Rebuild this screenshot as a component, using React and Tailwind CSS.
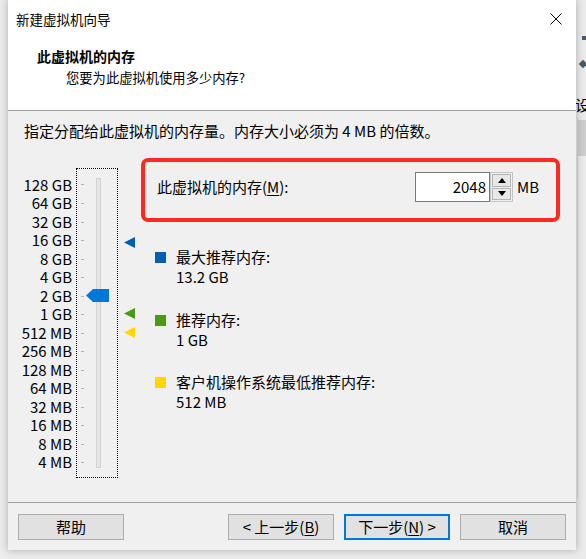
import React from "react";

const labels = ["128 GB","64 GB","32 GB","16 GB","8 GB","4 GB","2 GB","1 GB","512 MB","256 MB","128 MB","64 MB","32 MB","16 MB","8 MB","4 MB"];

function Tri({ color, top }) {
  return (
    <svg className="absolute left-[6px]" style={{ top }} width="11" height="11" viewBox="0 0 11 11">
      <polygon points="0,5.5 11,0 11,11" fill={color} />
    </svg>
  );
}

function Legend({ color, title, value, mt }) {
  return (
    <div className={`flex ${mt}`}>
      <div className="w-[11px] h-[11px] ml-[14px] mt-[5px]" style={{ background: color }} />
      <div className="ml-[10px] text-[15px] leading-[20px] text-black">
        <div>{title}</div>
        <div>{value}</div>
      </div>
    </div>
  );
}

export default function App() {
  return (
    <div className="flex w-[586px] h-[559px] bg-[#ececec] overflow-hidden font-['Noto_Sans_CJK_SC',sans-serif] text-black">
      <div className="w-[8px] shrink-0" />
      <div className="w-[568px] h-[550px] shrink-0 flex flex-col bg-[#f0f0f0] shadow-[0_0_8px_rgba(0,0,0,0.28)] relative z-10">
        <div className="h-[110px] bg-white flex flex-col">
          <div className="h-[38px] flex items-center justify-between pl-[8px] pr-[14px]">
            <span className="text-[13.5px] leading-[20px]">新建虚拟机向导</span>
            <svg width="12" height="12" viewBox="0 0 12 12">
              <path d="M0.5 0.5 L11.5 11.5 M11.5 0.5 L0.5 11.5" stroke="#000" strokeWidth="1" />
            </svg>
          </div>
          <div className="mt-[8px] pl-[29px] text-[14px] font-bold leading-[20px]">此虚拟机的内存</div>
          <div className="mt-[2px] pl-[58px] text-[13.3px] leading-[20px]">您要为此虚拟机使用多少内存?</div>
        </div>
        <div className="h-px bg-[#a0a0a0]" />
        <div className="flex-1 flex flex-col px-[16px] pt-[10px]">
          <div className="text-[15px] leading-[20px] whitespace-nowrap">指定分配给此虚拟机的内存量。内存大小必须为 4 MB 的倍数。</div>
          <div className="mt-[17px] flex items-start">
            <div className="w-[48px] mt-[10px] pt-[7.73px] flex flex-col items-end">
              {labels.map((l) => (
                <div key={l} className="h-[18.53px] leading-[18.53px] text-[15px] whitespace-nowrap">{l}</div>
              ))}
            </div>
            <div className="ml-[4px] mt-[10px] w-[42px] h-[310px] border border-dotted border-black relative flex">
              <div className="ml-[4px] w-[3px] pt-[6.73px] flex flex-col">
                {labels.map((l) => (
                  <div key={l} className="h-[18.53px] flex items-center">
                    <div className="w-[3px] h-px bg-[#b4b4b4]" />
                  </div>
                ))}
              </div>
              <div className="ml-[12px] mt-[9px] w-[5px] h-[290px] bg-[#e6e6e6] border border-[#d2d2d2]" />
              <svg className="absolute left-[9px] top-[120px]" width="23" height="13" viewBox="0 0 23 13">
                <polygon points="0,6.5 7,0 23,0 23,13 7,13" fill="#0078d7" />
              </svg>
            </div>
            <div className="w-[23px] self-stretch relative">
              <Tri color="#005fb0" top={79} />
              <Tri color="#4b9a17" top={150} />
              <Tri color="#ffd700" top={169} />
            </div>
            <div className="w-[419px] flex flex-col">
              <div className="h-[64px] border-4 border-[#ff2a1f] rounded-[7px] pt-[10px] pl-[12px]">
                <div className="flex items-center h-[30px]">
                  <div className="w-[258px] text-[15px] leading-[20px]">此虚拟机的内存(<span className="underline underline-offset-2">M</span>):</div>
                  <div className="w-[75px] h-[30px] border border-[#7a7a7a] bg-white text-right pr-[3px] text-[15px] leading-[28px]">2048</div>
                  <div className="w-[23px] h-[30px] flex flex-col bg-[#f0f0f0] border border-[#c4c4c4] p-px gap-px">
                    <div className="flex-1 flex items-center justify-center bg-[#e8e8e8] border border-[#b4b4b4]">
                      <svg width="8" height="5" viewBox="0 0 8 5"><polygon points="4,0 8,5 0,5" fill="#000" /></svg>
                    </div>
                    <div className="flex-1 flex items-center justify-center bg-[#e8e8e8] border border-[#b4b4b4]">
                      <svg width="8" height="5" viewBox="0 0 8 5"><polygon points="0,0 8,0 4,5" fill="#000" /></svg>
                    </div>
                  </div>
                  <div className="ml-[4px] text-[15px] leading-[20px]">MB</div>
                </div>
              </div>
              <Legend color="#005fb0" title="最大推荐内存:" value="13.2 GB" mt="mt-[25px]" />
              <Legend color="#4b9a17" title="推荐内存:" value="1 GB" mt="mt-[23px]" />
              <Legend color="#ffd700" title="客户机操作系统最低推荐内存:" value="512 MB" mt="mt-[22px]" />
            </div>
          </div>
        </div>
        <div className="h-px bg-[#a0a0a0]" />
        <div className="h-[47px] pt-[11px] px-[10px] flex items-start">
          <div className="w-[106px] h-[26px] flex items-center justify-center text-[15px] leading-[20px] bg-[#e1e1e1] border border-[#adadad]">帮助</div>
          <div className="flex-1" />
          <div className="flex gap-[10px]">
            <div className="w-[106px] h-[26px] flex items-center justify-center text-[15px] leading-[20px] bg-[#e1e1e1] border border-[#adadad] whitespace-nowrap">&lt; 上一步(<span className="underline underline-offset-2">B</span>)</div>
            <div className="w-[106px] h-[26px] flex items-center justify-center text-[15px] leading-[20px] bg-[#e1e1e1] border-2 border-[#0078d7] whitespace-nowrap">下一步(<span className="underline underline-offset-2">N</span>) &gt;</div>
            <div className="w-[106px] h-[26px] flex items-center justify-center text-[15px] leading-[20px] bg-[#e1e1e1] border border-[#adadad]">取消</div>
          </div>
        </div>
      </div>
      <div className="flex-1 relative bg-[#ebebeb] overflow-hidden">
        <div className="absolute left-[6px] top-[36px] w-[5px] h-[4px] bg-[#4a5868]" />
        <div className="absolute left-[4px] top-[61px] w-[6px] h-[6px] rotate-45 bg-[#4a5868]" />
        <div className="absolute left-[-1px] top-[95px] text-[15px] leading-[20px] text-black">设</div>
        <div className="absolute left-[1px] top-[118px] w-px h-[380px] bg-[#d4d4d4]" />
        <div className="absolute left-[2px] top-[120px] w-[8px] h-[36px] bg-[#cdcdcd]" />
      </div>
    </div>
  );
}
